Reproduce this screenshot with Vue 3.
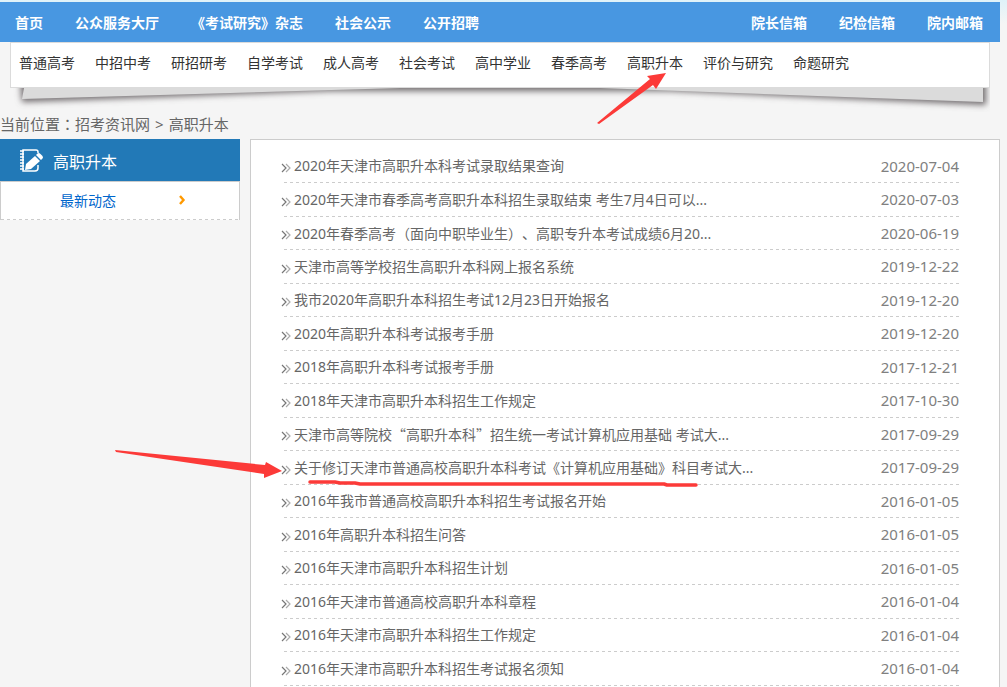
<script setup>
const mainLinks = ['首页', '公众服务大厅', '《考试研究》杂志', '社会公示', '公开招聘']
const mailLinks = ['院长信箱', '纪检信箱', '院内邮箱']
const examLinks = ['普通高考', '中招中考', '研招研考', '自学考试', '成人高考', '社会考试', '高中学业', '春季高考', '高职升本', '评价与研究', '命题研究']
const articles = [
  ['2020年天津市高职升本科考试录取结果查询', '2020-07-04'],
  ['2020年天津市春季高考高职升本科招生录取结束 考生7月4日可以...', '2020-07-03'],
  ['2020年春季高考（面向中职毕业生）、高职专升本考试成绩6月20...', '2020-06-19'],
  ['天津市高等学校招生高职升本科网上报名系统', '2019-12-22'],
  ['我市2020年高职升本科招生考试12月23日开始报名', '2019-12-20'],
  ['2020年高职升本科考试报考手册', '2019-12-20'],
  ['2018年高职升本科考试报考手册', '2017-12-21'],
  ['2018年天津市高职升本科招生工作规定', '2017-10-30'],
  ['天津市高等院校“高职升本科”招生统一考试计算机应用基础 考试大...', '2017-09-29'],
  ['关于修订天津市普通高校高职升本科考试《计算机应用基础》科目考试大...', '2017-09-29'],
  ['2016年我市普通高校高职升本科招生考试报名开始', '2016-01-05'],
  ['2016年高职升本科招生问答', '2016-01-05'],
  ['2016年天津市高职升本科招生计划', '2016-01-05'],
  ['2016年天津市普通高校高职升本科章程', '2016-01-04'],
  ['2016年天津市高职升本科招生工作规定', '2016-01-04'],
  ['2016年天津市高职升本科招生考试报名须知', '2016-01-04'],
].map(([title, date]) => ({ title, date, parts: title.split(/([“”（）])/).filter(Boolean) }))

const partClass = (p) => ({ quote: p === '“' || p === '”', centred: p === '（' || p === '）' })
const partLang = (p) => (p === '（' || p === '）' ? 'zh-TW' : null)
</script>

<template>
  <div class="page" lang="zh-CN">
    <header>
      <nav class="main-nav" aria-label="主导航">
        <a v-for="l in mainLinks" :key="l" href="#">{{ l }}</a>
        <span class="spacer"></span>
        <a v-for="l in mailLinks" :key="l" href="#">{{ l }}</a>
      </nav>
      <nav class="exam-nav" aria-label="考试导航">
        <a v-for="l in examLinks" :key="l" href="#">{{ l }}</a>
      </nav>
      <svg class="fold" viewBox="0 0 980 24" preserveAspectRatio="none" aria-hidden="true">
        <defs>
          <filter id="soft" x="-5%" y="-50%" width="110%" height="250%"><feGaussianBlur stdDeviation="3" /></filter>
        </defs>
        <path d="M10 -8H976V17L660 3H320L12 14Z" fill="#6f6b6d" filter="url(#soft)" />
        <path d="M14 0H390L12 11Z M590 0H973V14Z" fill="#dbdbdb" />
      </svg>
    </header>

    <div class="crumbs">
      <span>当前位置<span class="centred" lang="zh-TW">：</span><a href="#">招考资讯网</a></span>
      <span>&gt;</span>
      <a href="#">高职升本</a>
    </div>

    <div class="columns">
      <aside>
        <h2>
          <svg width="26" height="26" viewBox="0 0 26 26" aria-hidden="true">
            <path d="M19 5V4Q19 2 17 2H4V23H16Q19 23 19 20V17" fill="none" stroke="#fff" stroke-width="1.500" />
            <path d="M1 3H5M1 6H5M1 9H5M1 12H5M1 15H5M1 18H5M1 21H5" stroke="#fff" stroke-width="1.400" />
            <path d="M6 22L7 16L16 8L21 13L12 21ZM17 7L18.500 5.500Q20 4.500 21.500 6L23.500 8Q24.500 9.500 23.500 10.500L22 12Z" fill="#fff" />
          </svg>
          <span>高职升本</span>
        </h2>
        <a class="side-link" href="#">
          <span>最新动态</span>
          <svg width="8" height="10" viewBox="0 0 8 10" aria-hidden="true"><path d="M2 1L5.500 5L2 9" fill="none" stroke="#f90" stroke-width="2.400" /></svg>
        </a>
      </aside>

      <main>
        <ul>
          <li v-for="a in articles" :key="a.title">
            <svg width="10" height="10" viewBox="0 0 10 10" aria-hidden="true">
              <path d="M1 1L5 5L1 9" fill="none" stroke="#777" stroke-width="1.200" />
              <path d="M5 1L9 5L5 9" fill="none" stroke="#aaa" stroke-width="1.200" />
            </svg>
            <a href="#"><span v-for="(p, i) in a.parts" :key="i" :class="partClass(p)" :lang="partLang(p)">{{ p }}</span></a>
            <time>{{ a.date }}</time>
          </li>
        </ul>
      </main>
    </div>

    <svg class="marks" width="710" height="500" viewBox="0 0 710 500" aria-hidden="true">
      <path d="M597 123L650 79L647 76L666 73L656 89L653 85L599 124Z" fill="#fc3a38" />
      <path d="M115 450L265 465L266 462L282 471L264 478V474L116 452Z" fill="#fc3a38" />
      <path d="M310 482H335L340 483H355L360 484H664L667 485H696" fill="none" stroke="#fc3a38" stroke-width="3.500" stroke-linecap="round" stroke-linejoin="round" />
    </svg>
  </div>
</template>

<style>
body {
  margin: 0;
  background: #f5f5f5;
  overflow: hidden;
}
</style>

<style scoped>
.page {
  position: relative;
  box-sizing: border-box;
  padding: 2px 7px 0 0;
  background: linear-gradient(#dff2f9, #f5f5f5 24px);
  font-family: "Noto Sans", "Noto Sans CJK SC", sans-serif;
  font-size: 14px;
  text-spacing-trim: space-all;
  color: #666;
}
a {
  color: inherit;
  text-decoration: none;
  white-space: nowrap;
}
.main-nav {
  display: flex;
  align-items: center;
  gap: 32px;
  height: 40px;
  padding: 0 17px 0 15px;
  background: #4897e1;
  color: #fff;
  font-weight: bold;
}
.spacer {
  flex: 1;
}
.exam-nav {
  display: flex;
  align-items: center;
  gap: 20px;
  height: 44px;
  margin: 0 10px;
  padding: 0 8px;
  border: 1px solid #dbdbdb;
  background: #fff;
  color: #333;
}
.exam-nav a {
  line-height: 20px;
  padding-bottom: 4px;
}
.fold {
  display: block;
  width: calc(100% - 20px);
  height: 24px;
  margin: 0 10px;
}
.crumbs {
  display: flex;
  align-items: center;
  gap: 5px;
  box-sizing: border-box;
  height: 27px;
  padding-bottom: 4px;
  line-height: 20px;
  font-size: 15px;
}
.centred {
  font-family: "Noto Sans CJK TC", sans-serif;
}
.columns {
  display: flex;
  align-items: flex-start;
  gap: 10px;
}
aside {
  flex: 0 0 240px;
}
h2 {
  display: flex;
  align-items: center;
  gap: 8px;
  box-sizing: border-box;
  height: 42px;
  margin: 0;
  padding: 2px 0 0 19px;
  background: #2279b7;
  color: #fff;
  font-size: 16px;
  font-weight: normal;
}
.side-link {
  display: flex;
  align-items: center;
  justify-content: space-between;
  box-sizing: border-box;
  height: 39px;
  padding: 0 53px 2px 59px;
  border: 1px solid #ccc;
  border-bottom: 0;
  background: repeating-linear-gradient(90deg, #ccc 0 3px, #fff 3px 6px) bottom / 100% 1px no-repeat #fff;
  color: #06c;
}
main {
  flex: 1;
  min-width: 0;
  padding: 10px 40px 10px 30px;
  border: 1px solid #ccc;
  background: #fff;
}
ul {
  list-style: none;
  margin: 0;
  padding: 0;
}
li {
  position: relative;
  display: flex;
  align-items: center;
  box-sizing: border-box;
  height: 33px;
  padding-bottom: 1px;
  line-height: 20px;
}
li:nth-child(even) {
  height: 34px;
}
li::after {
  content: "";
  position: absolute;
  left: 3px;
  right: 0;
  bottom: 0;
  height: 1px;
  background: repeating-linear-gradient(90deg, #ccc 0 3px, transparent 3px 6px);
}
li svg {
  flex: none;
  margin: 4px 3px 0 0;
}
li a {
  flex: 1;
}
.quote {
  font-family: "Noto Sans CJK SC", sans-serif;
}
time {
  padding-bottom: 1px;
  font-size: 15px;
  color: #808080;
}
.marks {
  position: absolute;
  left: 0;
  top: 0;
  pointer-events: none;
}
</style>
